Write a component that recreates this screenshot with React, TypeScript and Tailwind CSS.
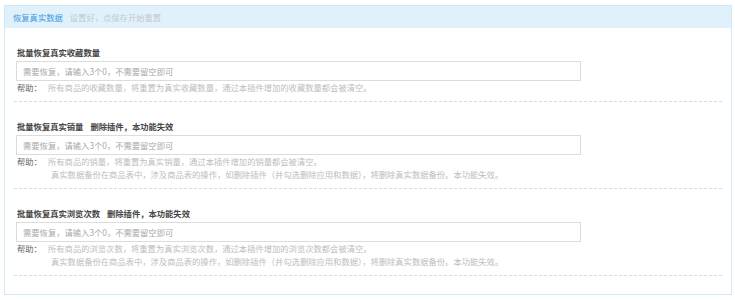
import React from "react";

const font = { fontFamily: '"Noto Sans CJK SC", "Noto Sans", sans-serif' };

function Section({
  title,
  note,
  help,
  extra,
}: {
  title: string;
  note?: string;
  help: string;
  extra?: string;
}) {
  return (
    <div className="mx-[9px] border-b border-dashed border-[#d9d9d9] pt-[17px] pb-[7px]">
      <div className="flex h-[14px] items-center pl-[3px] text-[8.3px] font-bold leading-[14px] text-[#444]">
        <span>{title}</span>
        {note && <span className="ml-[7px]">{note}</span>}
      </div>
      <div className="mt-[2px] ml-[2px] flex h-[20px] w-[565px] items-center border border-[#dcdcdc] bg-white pl-[6px] text-[8.3px] text-[#a8a8a8]">
        需要恢复，请输入3个0，不需要留空即可
      </div>
      <div className="flex h-[13px] items-center pl-[3px] text-[8.3px] leading-[13px]">
        <span className="w-[31px] text-[#666]">帮助：</span>
        <span className="text-[#bdbdbd]">{help}</span>
      </div>
      {extra && (
        <div className="flex h-[13px] items-center pl-[37px] text-[8.3px] leading-[13px] text-[#bdbdbd]">
          {extra}
        </div>
      )}
    </div>
  );
}

export default function App() {
  const extra =
    "真实数据备份在商品表中，涉及商品表的操作，如删除插件（并勾选删除应用和数据），将删除真实数据备份。本功能失效。";
  return (
    <div className="h-[300px] w-[735px] bg-white pt-[5px] pl-[4px]" style={font}>
      <div className="w-[728px] border border-[#d3e8f6] bg-white pb-[18px]">
        <div className="flex h-[22px] items-center bg-[#e0f1fc] pl-[8px] text-[8.3px]">
          <span className="text-[#3a98de]">恢复真实数据</span>
          <span className="ml-[7px] text-[#c2c9cf]">设置好，点保存开始重置</span>
        </div>
        <Section
          title="批量恢复真实收藏数量"
          help="所有商品的收藏数量，将重置为真实收藏数量，通过本插件增加的收藏数量都会被清空。"
        />
        <Section
          title="批量恢复真实销量"
          note="删除插件，本功能失效"
          help="所有商品的销量，将重置为真实销量，通过本插件增加的销量都会被清空。"
          extra={extra}
        />
        <Section
          title="批量恢复真实浏览次数"
          note="删除插件，本功能失效"
          help="所有商品的浏览次数，将重置为真实浏览次数，通过本插件增加的浏览次数都会被清空。"
          extra={extra}
        />
      </div>
    </div>
  );
}
